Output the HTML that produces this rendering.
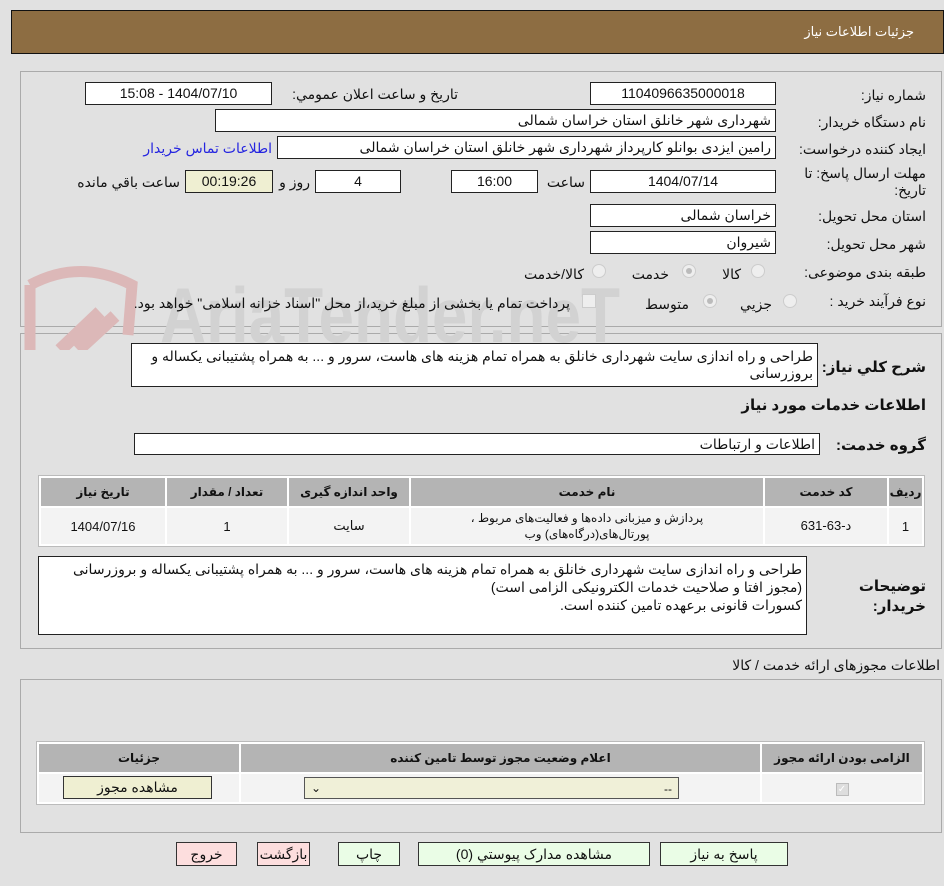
<!DOCTYPE html>
<html dir="rtl"><head><meta charset="utf-8">
<style>
*{box-sizing:border-box;margin:0;padding:0}
body{width:944px;height:886px;background:#e1e1e1;font-family:"Liberation Sans","DejaVu Sans",sans-serif;font-size:14px;color:#111;position:relative;overflow:hidden}
.a{position:absolute;white-space:nowrap}
.lbl{position:absolute;white-space:nowrap;font-size:14px;text-align:right}
.in{position:absolute;background:#fff;border:1px solid #222;height:23px;font-size:14px;line-height:21px;padding:0 4px;white-space:nowrap;overflow:hidden}
.c{text-align:center}
.r{text-align:right}
.radio{position:absolute;width:14px;height:14px;border-radius:50%;border:1px solid #ccc;background:#eee}
.radio.on::after{content:"";position:absolute;left:3px;top:3px;width:6px;height:6px;border-radius:50%;background:#bbb}
table{position:absolute;border-collapse:separate;border-spacing:2px;background:#fff;border:1px solid #bbb}
th{background:#b4b4b4;font-weight:bold;font-size:12px;height:28px}
td{background:#f3f3f3;font-size:13px;text-align:center}
.btn{position:absolute;height:24px;border:1px solid #333;font-size:14px;line-height:22px;text-align:center}
.g{background:#eafde6}.p{background:#fddede}
</style></head><body>
<div class="a" style="left:11px;top:10px;width:933px;height:44px;background:#8d6d42;border:1px solid #111"></div>
<div class="a" style="right:30px;top:24px;color:#fff;font-size:13px">جزئیات اطلاعات نیاز</div>

<div class="a" style="left:20px;top:71px;width:922px;height:256px;border:1px solid #aaa"></div>
<div class="a" style="left:20px;top:333px;width:922px;height:316px;border:1px solid #aaa"></div>

<!-- watermark -->
<svg class="a" style="left:20px;top:250px;direction:ltr" width="600" height="100" direction="ltr">
<path d="M10 35 Q60 8 112 35 L108 85 M10 35 L10 100" fill="none" stroke="#dcb8b8" stroke-width="11"/>
<path d="M40 100 L80 62 M58 100 L95 66" stroke="#dcb8b8" stroke-width="13"/>
<text x="140" y="92" text-anchor="start" direction="ltr" textLength="460" lengthAdjust="spacingAndGlyphs" font-family="Liberation Sans Narrow, Liberation Sans" font-weight="bold" font-size="78" fill="#d2d2d2">AriaTender.neT</text>
</svg>

<div class="lbl" style="right:18px;top:87px">شماره نیاز:</div>
<div class="in c" style="left:590px;top:82px;width:186px">1104096635000018</div>
<div class="lbl" style="right:486px;top:86px">تاریخ و ساعت اعلان عمومي:</div>
<div class="in c" style="left:85px;top:82px;width:187px">1404/07/10 - 15:08</div>

<div class="lbl" style="right:18px;top:114px">نام دستگاه خریدار:</div>
<div class="in r" style="left:215px;top:109px;width:561px">شهرداری شهر خانلق استان خراسان شمالی</div>

<div class="lbl" style="right:18px;top:141px">ایجاد کننده درخواست:</div>
<div class="in r" style="left:277px;top:136px;width:499px">رامین ایزدی بوانلو کارپرداز شهرداری شهر خانلق استان خراسان شمالی</div>
<div class="a" style="right:672px;top:140px;color:#2525e0">اطلاعات تماس خریدار</div>

<div class="lbl" style="right:18px;top:165px;line-height:17px">مهلت ارسال پاسخ: تا<br>تاریخ:</div>
<div class="in c" style="left:590px;top:170px;width:186px">1404/07/14</div>
<div class="a" style="right:359px;top:174px">ساعت</div>
<div class="in c" style="left:451px;top:170px;width:87px">16:00</div>
<div class="in c" style="left:315px;top:170px;width:86px">4</div>
<div class="a" style="right:634px;top:174px">روز و</div>
<div class="in c" style="left:185px;top:170px;width:88px;background:#efefd2">00:19:26</div>
<div class="a" style="right:764px;top:174px">ساعت باقي مانده</div>

<div class="lbl" style="right:18px;top:208px">استان محل تحویل:</div>
<div class="in r" style="left:590px;top:204px;width:186px">خراسان شمالی</div>
<div class="lbl" style="right:18px;top:236px">شهر محل تحویل:</div>
<div class="in r" style="left:590px;top:231px;width:186px">شیروان</div>

<div class="lbl" style="right:18px;top:264px">طبقه بندی موضوعی:</div>
<div class="radio" style="left:751px;top:264px"></div>
<div class="a" style="right:203px;top:266px">کالا</div>
<div class="radio on" style="left:682px;top:264px"></div>
<div class="a" style="right:275px;top:266px">خدمت</div>
<div class="radio" style="left:592px;top:264px"></div>
<div class="a" style="right:360px;top:266px">کالا/خدمت</div>

<div class="lbl" style="right:18px;top:293px">نوع فرآیند خرید :</div>
<div class="radio" style="left:783px;top:294px"></div>
<div class="a" style="right:172px;top:296px">جزيي</div>
<div class="radio on" style="left:703px;top:294px"></div>
<div class="a" style="right:255px;top:296px">متوسط</div>
<div class="a" style="left:582px;top:294px;width:14px;height:14px;border:1px solid #ccc;background:#eee"></div>
<div class="a" style="right:374px;top:295px">پرداخت تمام یا بخشی از مبلغ خرید،از محل "اسناد خزانه اسلامی" خواهد بود.</div>

<div class="lbl" style="right:18px;top:358px;font-weight:bold;font-size:15px">شرح کلي نياز:</div>
<div class="in r" style="left:131px;top:343px;width:687px;height:44px;line-height:17px;white-space:normal;padding-top:4px">طراحی و راه اندازی سایت شهرداری خانلق به همراه تمام هزینه های هاست، سرور و ... به همراه پشتیبانی یکساله و بروزرسانی</div>
<div class="lbl" style="right:18px;top:396px;font-weight:bold;font-size:15px">اطلاعات خدمات مورد نیاز</div>
<div class="lbl" style="right:18px;top:436px;font-weight:bold;font-size:15px">گروه خدمت:</div>
<div class="in r" style="left:134px;top:433px;width:686px;height:22px">اطلاعات و ارتباطات</div>

<table style="left:38px;top:475px;width:887px">
<tr><th style="width:33px">ردیف</th><th style="width:122px">کد خدمت</th><th>نام خدمت</th><th style="width:120px">واحد اندازه گیری</th><th style="width:120px">تعداد / مقدار</th><th style="width:124px">تاریخ نیاز</th></tr>
<tr><td style="height:36px">1</td><td>د-63-631</td><td style="font-size:12px;line-height:16px">پردازش و میزبانی داده‌ها و فعالیت‌های مربوط ،<br>پورتال‌های(درگاه‌های) وب</td><td>سایت</td><td>1</td><td>1404/07/16</td></tr>
</table>

<div class="lbl" style="right:18px;top:577px;font-weight:bold;font-size:15px;line-height:20px">توضیحات<br>خریدار:</div>
<div class="in r" style="left:38px;top:556px;width:769px;height:79px;line-height:18px;white-space:normal;padding-top:3px;font-size:14px">طراحی و راه اندازی سایت شهرداری خانلق به همراه تمام هزینه های هاست، سرور و ... به همراه پشتیبانی یکساله و بروزرسانی (مجوز افتا و صلاحیت خدمات الکترونیکی الزامی است)<br>کسورات قانونی برعهده تامین کننده است.</div>

<div class="a" style="right:4px;top:657px">اطلاعات مجوزهای ارائه خدمت / کالا</div>
<div class="a" style="left:20px;top:679px;width:922px;height:154px;border:1px solid #aaa"></div>
<table style="left:36px;top:741px;width:889px">
<tr><th style="width:160px">الزامی بودن ارائه مجوز</th><th>اعلام وضعیت مجوز توسط تامین کننده</th><th style="width:200px">جزئیات</th></tr>
<tr><td style="height:28px"><span style="display:inline-block;width:13px;height:13px;border:1px solid #bbb;background:#ddd;color:#fff;font-size:10px;line-height:12px">✓</span></td>
<td style="position:relative"><div style="position:absolute;left:63px;top:3px;width:375px;height:22px;border:1px solid #555;background:#f0f0d8;font-size:12px;text-align:right;padding:2px 6px;line-height:18px">--<span style="position:absolute;left:6px;top:1px">⌄</span></div></td>
<td style="position:relative"><div style="position:absolute;left:24px;top:2px;width:149px;height:23px;border:1px solid #333;background:#efefd2;line-height:21px;font-size:14px">مشاهده مجوز</div></td></tr>
</table>

<div class="btn g" style="left:660px;top:842px;width:128px">پاسخ به نیاز</div>
<div class="btn g" style="left:418px;top:842px;width:232px">مشاهده مدارک پیوستي (0)</div>
<div class="btn g" style="left:338px;top:842px;width:62px">چاپ</div>
<div class="btn p" style="left:257px;top:842px;width:53px">بازگشت</div>
<div class="btn p" style="left:176px;top:842px;width:61px">خروج</div>
</body></html>
